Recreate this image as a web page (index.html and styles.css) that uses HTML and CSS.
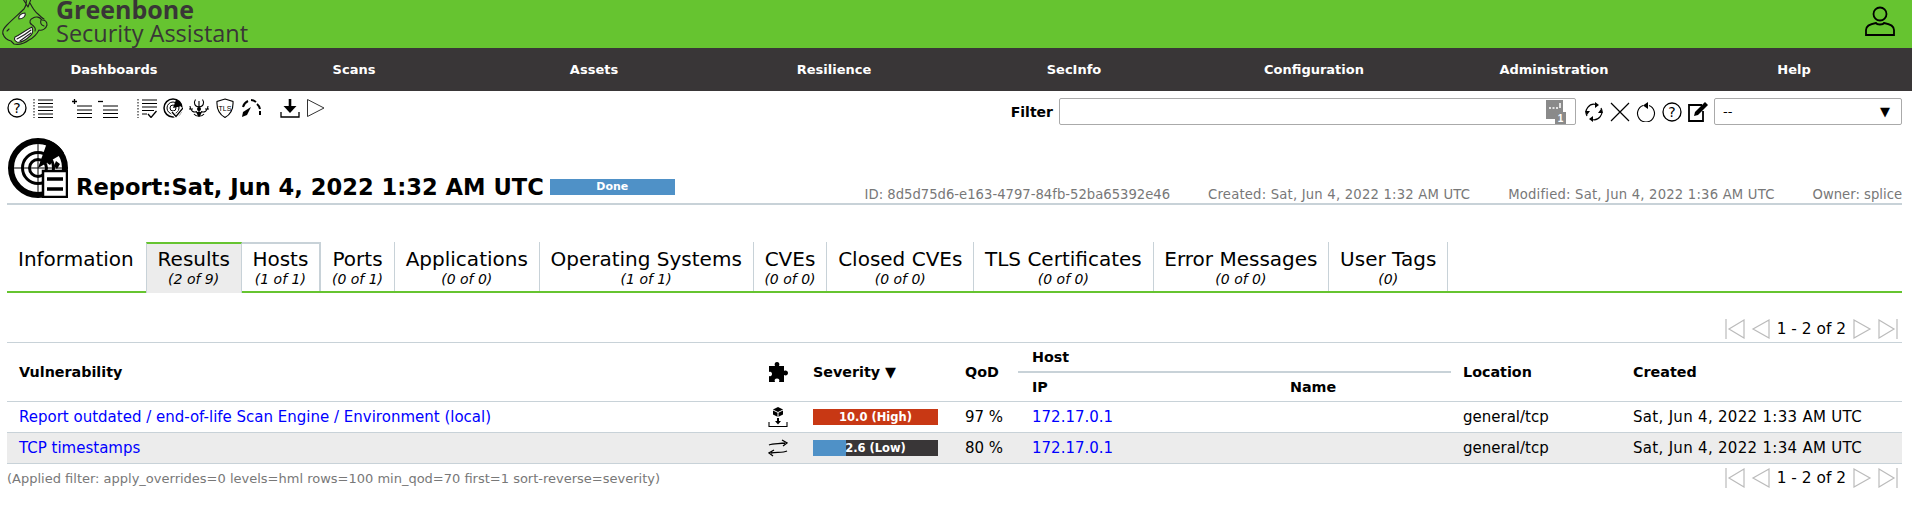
FILE: index.html
```html
<!DOCTYPE html>
<html lang="en">
<head>
    <meta charset="UTF-8">
    <title>Report - Greenbone Security Assistant</title>
    <link rel="stylesheet" href="styles.css">
</head>
<body>
    <div class="header">
        <div class="brand">
            <svg class="logo" viewBox="0 0 50 48" fill="none" stroke="#222" stroke-width="1.1" stroke-linejoin="round" stroke-linecap="round">
                <path d="M3 34C2 31 4 28 7 25C13 19 20 13 24 9C26 6 27 3 26 -1M23 -1L28 7L31 -1M30 3C32 7 34 11 38 14C40 16 42 18 44 19"/>
                <path d="M3 34C4 37 7 40 11 41L14 44C19 45 25 43 29 40C33 38 37 34 39 30C42 31 46 29 47 25C47 22 45 20 42 20C40 17 36 16 33 18C30 19 29 22 31 24"/>
                <path d="M19 19C18 16 21 13 25 13C26 15 24 19 19 19Z" fill="#fff"/>
                <path d="M15 37C20 35 24 31 32 27C33 30 33 33 31 35C27 39 21 43 17 42C15 41 14 39 15 37Z" fill="#fff"/>
                <path d="M17 39C21 37 26 34 31 30M20 41L31 33M7 31L9 29M31 24C34 26 36 29 35 31M41 20C40 23 41 25 44 26"/>
            </svg>
            <div class="brand-text">
                <span class="brand-name">Greenbone</span>
                <span class="brand-sub">Security Assistant</span>
            </div>
        </div>
        <svg class="user-icon" viewBox="0 0 30 30" fill="none" stroke="#000" stroke-width="1.8">
            <ellipse cx="15" cy="8" rx="6.5" ry="6.5"/>
            <path d="M1 29V24C1 20 5 18 11 17C12 19 18 19 19 17C25 18 29 20 29 24V29Z"/>
        </svg>
    </div>

    <ul class="nav">
        <li>Dashboards</li>
        <li>Scans</li>
        <li>Assets</li>
        <li>Resilience</li>
        <li>SecInfo</li>
        <li>Configuration</li>
        <li>Administration</li>
        <li>Help</li>
    </ul>

    <div class="toolbar">
        <div class="tool-icons">
            <svg class="icon" viewBox="0 0 20 20"><circle cx="10" cy="10" r="9" fill="none" stroke="#000" stroke-width="1.300"/><text x="10" y="15" class="q">?</text></svg>
            <svg class="icon" viewBox="0 0 20 20"><path d="M1 1V20" stroke="#000" stroke-dasharray="1.5 1.5" fill="none"/><path d="M5 2H20M5 5.500H20M5 9H20M5 12.500H20M5 16H20M5 19.500H20" stroke="#000" stroke-width="1.200"/></svg>
            <svg class="icon gap-l" viewBox="0 0 20 20"><path d="M0 3.500H5M2.500 1V6" stroke="#000" stroke-width="1.300"/><path d="M5 8H20M5 12H20M5 15.500H20M5 19.500H20" stroke="#000" stroke-width="1.200"/></svg>
            <svg class="icon" viewBox="0 0 20 20"><path d="M0 3.500H5" stroke="#000" stroke-width="1.300"/><path d="M5 8H20M5 12H20M5 15.500H20M5 19.500H20" stroke="#000" stroke-width="1.200"/></svg>
            <svg class="icon gap-l" viewBox="0 0 20 20"><path d="M1 1V20" stroke="#000" stroke-dasharray="1.5 1.5" fill="none"/><path d="M5 2H20M5 5.500H20M5 9H20M5 12.500H17M5 16H10" stroke="#000" stroke-width="1.200"/><path d="M11 16L14 19.500L19.500 13" stroke="#000" stroke-width="1.300" fill="none"/></svg>
            <svg class="icon" viewBox="0 0 20 20"><circle cx="10" cy="10" r="9" fill="none" stroke="#000" stroke-width="1.500"/><circle cx="10" cy="10" r="6" fill="none" stroke="#000" stroke-width="1"/><circle cx="10" cy="10" r="3" fill="none" stroke="#000" stroke-width="1"/><path d="M10 10L13 1.500A9 9 0 0 1 19 8Z"/><path d="M9 14L13 18.500L20 10" stroke="#fff" stroke-width="3.500" fill="none"/><path d="M9 14L13 18.500L20 10" stroke="#000" stroke-width="1.300" fill="none"/></svg>
            <svg class="icon" viewBox="0 0 20 20"><circle cx="10" cy="11" r="2"/><path d="M6.500 1.500C4 5 6 9 10 9C14 9 16 5 13.500 1.500M1 8C1 13 5 15 8 13.500M19 8C19 13 15 15 12 13.500M5 16C7 19 13 19 15 16M10 3V19M0 11H4M16 11H20" stroke="#000" fill="none" stroke-width="1.100"/><path d="M7 14H13L11 18H9Z"/></svg>
            <svg class="icon" viewBox="0 0 20 20"><path d="M10 1L18 3.500C18.500 11 16 16 10 19.500C4 16 1.500 11 2 3.500Z" fill="none" stroke="#000" stroke-width="1.100"/><text x="10" y="12.500" class="tls">TLS</text></svg>
            <svg class="icon" viewBox="0 0 20 20"><path d="M1 19L2 14L10 9L6 17Z"/><path d="M2 9A9 9 0 0 1 7 3M10 2A9 9 0 0 1 15 4M16 6A9 9 0 0 1 19 11M19 13V17" stroke="#000" stroke-width="2" fill="none"/></svg>
            <svg class="icon gap-l" viewBox="0 0 20 20"><path d="M10 1V12" stroke="#000" stroke-width="2.600"/><path d="M3.500 8L10 15L16.500 8Z"/><path d="M1 14V19H19V14" stroke="#000" stroke-width="1.300" fill="none"/></svg>
            <svg class="icon" viewBox="0 0 20 20"><path d="M1.500 1.500L18 10L1.500 18.500Z" fill="none" stroke="#333" stroke-width="1"/></svg>
        </div>
        <div class="filter">
            <label class="filter-label">Filter</label>
            <div class="filter-input">
                <svg class="filter-badge" viewBox="0 0 20 24"><path d="M0 0H17V15H14V19H0Z" fill="#8a8a8a"/><path d="M3 8H5M6.500 8H8.500M10 8H12M14 3V8" stroke="#fff" stroke-width="1.500"/><rect x="9" y="12" width="11" height="12" fill="#8a8a8a"/><text x="14.500" y="22" class="badge-num">1</text></svg>
            </div>
            <svg class="icon" viewBox="0 0 20 20"><path d="M3 14A8 8 0 0 1 12 2.500M17 6A8 8 0 0 1 8 17.500" fill="none" stroke="#000" stroke-width="1.200"/><path d="M11 0L15 3L11 6ZM9 14L5 17L9 20ZM1 9H6L3 13ZM14 11H19L17 7Z"/></svg>
            <svg class="icon" viewBox="0 0 20 20"><path d="M1 1L19 19M19 1L1 19" stroke="#000" stroke-width="1.200"/></svg>
            <svg class="icon" viewBox="0 0 20 20"><path d="M7 3.500A8.500 8.500 0 1 0 13 3.500" fill="none" stroke="#000" stroke-width="1.100"/><path d="M12 0L7 3.500L12 7Z"/></svg>
            <svg class="icon" viewBox="0 0 20 20"><circle cx="10" cy="10" r="9" fill="none" stroke="#000" stroke-width="1.300"/><text x="10" y="15" class="q">?</text></svg>
            <svg class="icon" viewBox="0 0 20 20"><path d="M14 3H1V19H15V9" fill="none" stroke="#000" stroke-width="1.800"/><path d="M6 14L7 10L17 0L20 3L10 13Z"/></svg>
            <div class="filter-select"><span>--</span><span class="select-arrow">▼</span></div>
        </div>
    </div>

    <div class="title-row">
        <div class="title-left">
            <svg class="report-icon" viewBox="0 0 60 60">
                <circle cx="30" cy="30" r="27" fill="none" stroke="#000" stroke-width="6"/>
                <circle cx="30" cy="30" r="15.500" fill="none" stroke="#000" stroke-width="3"/>
                <circle cx="30" cy="30" r="8.500" fill="none" stroke="#000" stroke-width="3"/>
                <path d="M0 30H60M30 0V60" stroke="#000" stroke-width="1"/>
                <path d="M30 30L40 2A30 30 0 0 1 56 15Z"/>
                <path d="M39 25L41 20L45 23L42 27ZM46 28L48 23L52 26L49 31Z"/>
                <rect x="35" y="33" width="24" height="26" fill="#fff" stroke="#000" stroke-width="2.500"/>
                <path d="M39 41H55M39 51H55" stroke="#000" stroke-width="3.500"/>
            </svg>
            <h1 class="report-title">Report:Sat, Jun 4, 2022 1:32 AM UTC</h1>
            <div class="status-bar">Done</div>
        </div>
        <div class="report-meta">
            <span>ID: 8d5d75d6-e163-4797-84fb-52ba65392e46</span>
            <span class="meta-date">Created: Sat, Jun 4, 2022 1:32 AM UTC</span>
            <span class="meta-date">Modified: Sat, Jun 4, 2022 1:36 AM UTC</span>
            <span>Owner: splice</span>
        </div>
    </div>

    <div class="tabs">
        <div class="tab tab-first"><div class="tab-name">Information</div></div>
        <div class="tab tab-active"><div class="tab-name">Results</div><div class="tab-count">(2 of 9)</div></div>
        <div class="tab tab-next"><div class="tab-name">Hosts</div><div class="tab-count">(1 of 1)</div></div>
        <div class="tab"><div class="tab-name">Ports</div><div class="tab-count">(0 of 1)</div></div>
        <div class="tab"><div class="tab-name">Applications</div><div class="tab-count">(0 of 0)</div></div>
        <div class="tab"><div class="tab-name">Operating Systems</div><div class="tab-count">(1 of 1)</div></div>
        <div class="tab"><div class="tab-name">CVEs</div><div class="tab-count">(0 of 0)</div></div>
        <div class="tab"><div class="tab-name">Closed CVEs</div><div class="tab-count">(0 of 0)</div></div>
        <div class="tab"><div class="tab-name">TLS Certificates</div><div class="tab-count">(0 of 0)</div></div>
        <div class="tab"><div class="tab-name">Error Messages</div><div class="tab-count">(0 of 0)</div></div>
        <div class="tab tab-last"><div class="tab-name">User Tags</div><div class="tab-count">(0)</div></div>
    </div>

    <div class="pager pager-top">
        <svg class="page-icon" viewBox="0 0 20 20"><path d="M1 0V20M19 1L4 10L19 19Z"/></svg>
        <svg class="page-icon" viewBox="0 0 20 20"><path d="M18 1L2 10L18 19Z"/></svg>
        <span>1 - 2 of 2</span>
        <svg class="page-icon" viewBox="0 0 20 20"><path d="M2 1L18 10L2 19Z"/></svg>
        <svg class="page-icon" viewBox="0 0 20 20"><path d="M19 0V20M1 1L16 10L1 19Z"/></svg>
    </div>

    <table class="results">
        <colgroup>
            <col class="col-vuln"><col class="col-sol"><col class="col-sev"><col class="col-qod">
            <col class="col-ip"><col class="col-name"><col class="col-loc"><col class="col-created">
        </colgroup>
        <thead>
            <tr>
                <th rowspan="2">Vulnerability</th>
                <th rowspan="2" class="center">
                    <svg class="sol-icon" viewBox="0 0 20 20"><path d="M1 4H7C6 2 7 0 9 0C11 0 12 2 11 4H16V9C18 8 20 9 20 11C20 13 18 14 16 13V20H11C12 18 11 16.500 9 16.500C7 16.500 6 18 7 20H1V14C3 15 4 13.500 4 12C4 10.500 3 9 1 10Z"/></svg>
                </th>
                <th rowspan="2">Severity ▼</th>
                <th rowspan="2">QoD</th>
                <th colspan="2" class="host-head">Host</th>
                <th rowspan="2">Location</th>
                <th rowspan="2">Created</th>
            </tr>
            <tr>
                <th class="sub-head">IP</th>
                <th class="sub-head">Name</th>
            </tr>
        </thead>
        <tbody>
            <tr>
                <td><a href="#">Report outdated / end-of-life Scan Engine / Environment (local)</a></td>
                <td class="center">
                    <svg class="sol-icon" viewBox="0 0 20 20"><path d="M10 0L15 2.500V7.500L10 10L5 7.500V2.500Z"/><path d="M5 3L10 5.500L15 3M10 5.500V10" stroke="#fff" fill="none"/><path d="M10 11V15" stroke="#000" stroke-width="2"/><path d="M7 14H13L10 17.500Z"/><path d="M1 15V19.500H19V15" stroke="#000" stroke-width="1.100" fill="none"/></svg>
                </td>
                <td><div class="sev-bar sev-high"><span class="sev-fill" style="width: 100%"></span><span class="sev-label">10.0 (High)</span></div></td>
                <td>97 %</td>
                <td><a href="#">172.17.0.1</a></td>
                <td></td>
                <td>general/tcp</td>
                <td class="date-cell">Sat, Jun 4, 2022 1:33 AM UTC</td>
            </tr>
            <tr class="row-alt">
                <td><a href="#">TCP timestamps</a></td>
                <td class="center">
                    <svg class="sol-icon" viewBox="0 0 20 20"><path d="M1 7C5 5 11 6 17 5M14 2L19 5L15 8M19 13C15 15 9 14 3 15M6 12L1 15L5 18" stroke="#000" stroke-width="1.300" fill="none"/></svg>
                </td>
                <td><div class="sev-bar sev-low"><span class="sev-fill" style="width: 26%"></span><span class="sev-label">2.6 (Low)</span></div></td>
                <td>80 %</td>
                <td><a href="#">172.17.0.1</a></td>
                <td></td>
                <td>general/tcp</td>
                <td class="date-cell">Sat, Jun 4, 2022 1:34 AM UTC</td>
            </tr>
        </tbody>
    </table>

    <div class="table-foot">
        <div class="applied">(Applied filter: apply_overrides=0 levels=hml rows=100 min_qod=70 first=1 sort-reverse=severity)</div>
        <div class="pager">
            <svg class="page-icon" viewBox="0 0 20 20"><path d="M1 0V20M19 1L4 10L19 19Z"/></svg>
            <svg class="page-icon" viewBox="0 0 20 20"><path d="M18 1L2 10L18 19Z"/></svg>
            <span>1 - 2 of 2</span>
            <svg class="page-icon" viewBox="0 0 20 20"><path d="M2 1L18 10L2 19Z"/></svg>
            <svg class="page-icon" viewBox="0 0 20 20"><path d="M19 0V20M1 1L16 10L1 19Z"/></svg>
        </div>
    </div>
</body>
</html>
```

FILE: styles.css
```css
html, body {
    margin: 0;
    padding: 0;
}
body {
    font-family: "DejaVu Sans", Verdana, sans-serif;
    font-size: 13px;
    color: #000;
    background-color: #fff;
    overflow: hidden;
}
.header {
    height: 48px;
    background-color: #66c430;
    display: flex;
    justify-content: space-between;
    align-items: center;
    padding-right: 17px;
    overflow: hidden;
}
.brand {
    display: flex;
    align-items: center;
    height: 48px;
}
.logo {
    width: 50px;
    height: 48px;
    flex: none;
}
.brand-text {
    margin-left: 6px;
    color: #393637;
    font-family: "Open Sans", sans-serif;
    line-height: 24px;
    margin-top: -6px;
}
.brand-name {
    display: block;
    font-size: 25px;
    font-weight: 700;
}
.brand-sub {
    display: block;
    font-size: 23.500px;
}
.user-icon {
    width: 30px;
    height: 30px;
    margin-top: -6px;
}
.nav {
    list-style: none;
    margin: 0 0 0 -6px;
    padding: 0;
    width: 1920px;
    height: 43px;
    background-color: #393637;
    display: grid;
    grid-template-columns: repeat(8, 240px);
    align-items: center;
    text-align: center;
    color: #fff;
    font-weight: bold;
    font-size: 13px;
}
.toolbar {
    display: flex;
    justify-content: space-between;
    padding: 7px 10px 0 7px;
    height: 44px;
    box-sizing: border-box;
}
.tool-icons {
    display: flex;
    gap: 6px;
    height: 20px;
    align-items: center;
}
.icon {
    width: 20px;
    height: 20px;
    flex: none;
}
.gap-l {
    margin-left: 13px;
}
.q {
    font-family: "DejaVu Sans", sans-serif;
    font-size: 14px;
    text-anchor: middle;
}
.tls {
    font-family: "Liberation Sans", sans-serif;
    font-size: 7px;
    text-anchor: middle;
}
.badge-num {
    font-family: "Liberation Sans", sans-serif;
    font-size: 10px;
    font-weight: bold;
    fill: #fff;
    text-anchor: middle;
}
.filter {
    display: flex;
    align-items: center;
    gap: 6px;
    height: 27px;
}
.filter-label {
    font-weight: bold;
    font-size: 14px;
}
.filter-input, .filter-select {
    height: 27px;
    box-sizing: border-box;
    border: 1px solid #aaa;
    border-radius: 2px;
    display: flex;
    align-items: center;
}
.filter-input {
    width: 517px;
    justify-content: flex-end;
    padding-right: 9px;
    margin-right: 2px;
}
.filter-badge {
    width: 20px;
    height: 24px;
}
.filter-select {
    width: 188px;
    justify-content: space-between;
    padding: 0 11px 0 8px;
}
.select-arrow {
    font-size: 13px;
}
.title-row {
    margin: 0 10px 0 7px;
    height: 70px;
    box-sizing: border-box;
    border-bottom: 2px solid #c8d2d8;
    display: flex;
    justify-content: space-between;
    align-items: flex-end;
}
.title-left {
    display: flex;
    align-items: flex-end;
}
.report-icon {
    width: 60px;
    height: 60px;
    flex: none;
    margin: 0 0 5px 1px;
}
.report-title {
    margin: 0 0 3px 8px;
    font-size: 22.600px;
    line-height: 26px;
    font-weight: bold;
}
.status-bar {
    width: 125px;
    height: 16px;
    line-height: 16px;
    margin: 0 0 8px 6px;
    background-color: #4f91c7;
    color: #fff;
    font-size: 11px;
    font-weight: bold;
    text-align: center;
}
.report-meta {
    display: flex;
    gap: 38px;
    color: #787878;
    font-size: 13.200px;
    padding-bottom: 1px;
}
.meta-date {
    letter-spacing: 0.2px;
}
.tabs {
    margin: 37px 10px 0 7px;
    height: 49px;
    border-bottom: 2px solid #66c430;
    display: flex;
}
.tab {
    box-sizing: border-box;
    height: 49px;
    padding: 5px 10.800px 0;
    border-left: 1px solid #c8d2d8;
    text-align: center;
}
.tab-first {
    border-left: none;
    padding: 5px 12px 0 11px;
}
.tab-last {
    border-right: 1px solid #c8d2d8;
}
.tab-name {
    font-size: 20px;
    line-height: 24px;
}
.tab-count {
    font-size: 14px;
    font-style: italic;
    line-height: 17px;
}
.tab-active {
    background-color: #ececec;
    border-top: 2px solid #66c430;
    border-right: 1px solid #c8d2d8;
    height: 51px;
    padding-top: 3px;
}
.tab-next {
    border-top: 2px solid #c8d2d8;
    border-right: 1px solid #c8d2d8;
    border-left: none;
    padding-top: 3px;
}
.pager {
    display: flex;
    align-items: center;
    justify-content: flex-end;
    gap: 6px;
    font-size: 15.400px;
}
.pager-top {
    margin: 25px 14px 2px 0;
    height: 22px;
}
.page-icon {
    width: 20px;
    height: 20px;
    fill: none;
    stroke: #bbb;
    stroke-width: 1.200;
}
.results {
    width: 1895px;
    margin-left: 7px;
    table-layout: fixed;
    border-collapse: collapse;
    border-top: 1px solid #c8d2d8;
}
.col-vuln { width: 748px; }
.col-sol { width: 46px; }
.col-sev { width: 152px; }
.col-qod { width: 65px; }
.col-ip { width: 260px; }
.col-name { width: 173px; }
.col-loc { width: 170px; }
th, td {
    text-align: left;
    padding: 0 0 0 12px;
    font-size: 15px;
}
thead {
    border-bottom: 1px solid #c8d2d8;
}
th {
    height: 28px;
    font-size: 14.300px;
}
th.center, td.center {
    padding: 0;
    line-height: 0;
}
.host-head {
    border-bottom: 2px solid #c8d2d8;
    padding-left: 14px;
}
.sub-head:first-child {
    padding-left: 14px;
}
td {
    height: 30px;
}
tbody tr {
    border-bottom: 1px solid #c8d2d8;
}
.row-alt {
    background-color: #ececec;
}
a {
    color: #00f;
    text-decoration: none;
}
td:nth-child(5) {
    padding-left: 14px;
}
.date-cell {
    letter-spacing: 0.3px;
    white-space: nowrap;
}
.sol-icon {
    display: block;
    width: 20px;
    height: 20px;
    margin: 0 auto;
}
.sev-bar {
    position: relative;
    width: 125px;
    height: 16px;
    background-color: #393637;
}
.sev-fill {
    display: block;
    height: 16px;
}
.sev-high .sev-fill {
    background-color: #c83814;
}
.sev-low .sev-fill {
    background-color: #4f91c7;
}
.sev-label {
    position: absolute;
    left: 0;
    right: 0;
    top: 0;
    text-align: center;
    line-height: 16px;
    color: #fff;
    font-size: 11.500px;
    font-weight: bold;
}
.table-foot {
    display: flex;
    justify-content: space-between;
    align-items: center;
    margin: 4px 14px 0 7px;
}
.applied {
    color: #787878;
    font-size: 13px;
}
```
